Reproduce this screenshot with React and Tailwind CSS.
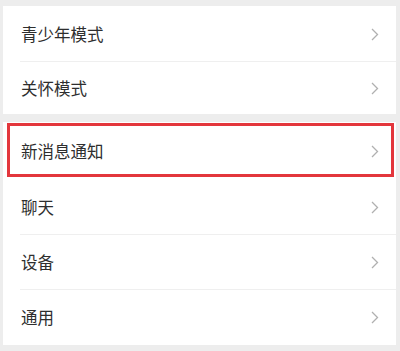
import React from 'react';

const font = { fontFamily: '"Noto Sans CJK SC", "Noto Sans", sans-serif' };

// A single settings row with a chevron on the right
const Row = ({ label, h = 'h-[55px]', divider = true, children }) => (
  <div className={`relative flex items-center justify-between pl-[18px] pr-[17px] ${h}`}>
    <span className="text-[16.5px] text-[#2e2e2e] leading-none">{label}</span>
    <svg width="8" height="13" viewBox="0 0 8 13" fill="none">
      <path d="M1 1l5.5 5.5L1 12" stroke="#b0b0b0" strokeWidth="1.3" />
    </svg>
    {divider && <div className="absolute bottom-0 left-[17px] right-0 h-px bg-[#efefef]" />}
    {children}
  </div>
);

export default function App() {
  return (
    <div className="w-[400px] h-[351px] bg-[#ededed] pt-[6px] pl-[3px] pr-[4px] overflow-hidden" style={font}>
      {/* first group */}
      <div className="bg-white">
        <Row label="青少年模式" h="h-[56px]" />
        <Row label="关怀模式" h="h-[52px]" divider={false} />
      </div>

      {/* second group */}
      <div className="bg-white mt-[8px]">
        <Row label="新消息通知" h="h-[58px]" divider={false}>
          <div className="absolute left-[4px] right-[2px] top-[1px] h-[54px] border-[3px] border-[#e3363c]" />
        </Row>
        <Row label="聊天" />
        <Row label="设备" />
        <Row label="通用" divider={false} />
      </div>
    </div>
  );
}
